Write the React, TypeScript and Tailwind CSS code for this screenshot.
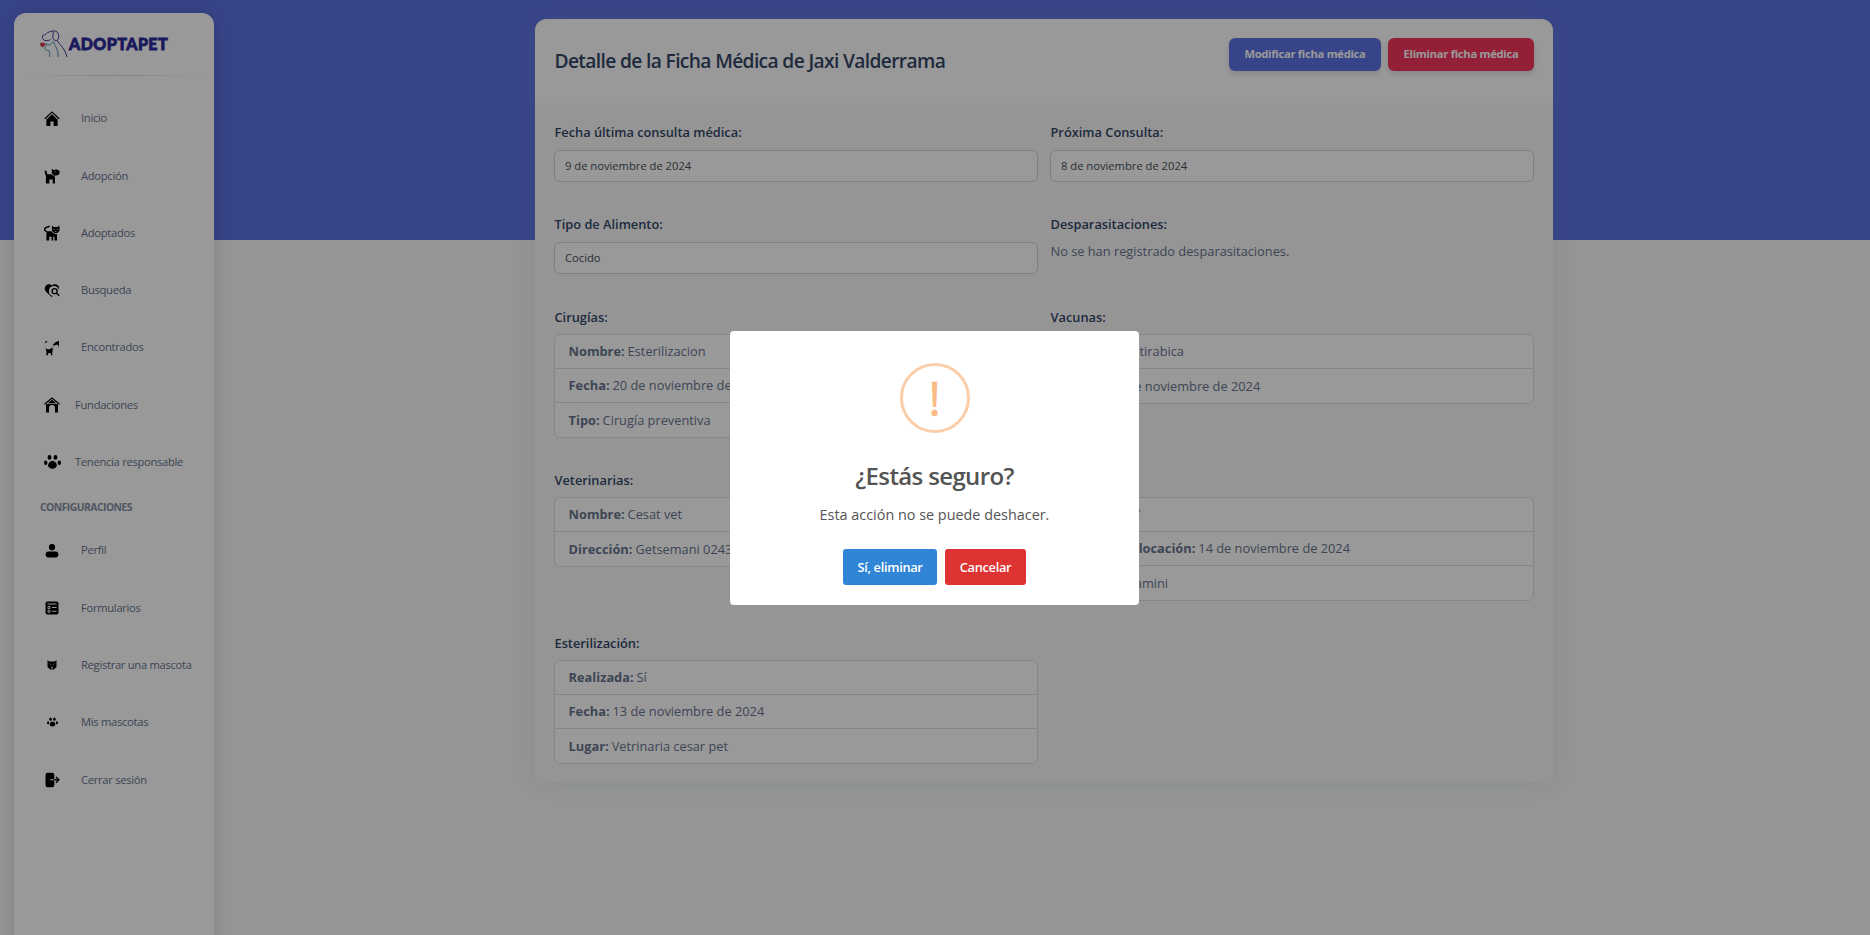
import React from "react";

type Row = [string, string];

const Svg = ({ children, size = 16 }: { children: React.ReactNode; size?: number }) => (
  <svg width={size} height={size} viewBox="0 0 16 16" fill="currentColor">
    {children}
  </svg>
);

const HomeIcon = () => (
  <Svg>
    <path d="M.8 7.7 8 1.100l7.200 6.600" fill="none" stroke="currentColor" strokeWidth="1.200" />
    <path d="M8 3.300 2.400 8.400V15h4v-4.600h3.200V15h4V8.400z" />
  </Svg>
);

const DogIcon = () => (
  <Svg>
    <path d="M.6 3.800a1.100 1.100 0 1 1 2.100.4L3.500 6.300H7.500l3.500 2.400V15.400H8.700v-3.800H5.400v3.800H1.900V8z" />
    <path d="M7.800.8 10 2.200l2-.9 3.500 1.500v2.600l-1.500 1.800H12L10.500 8 7.800 5.200z" />
    <circle cx="11.600" cy="3.800" r=".5" fill="#fff" />
  </Svg>
);

const CatIcon = () => (
  <Svg>
    <path d="M5.600.9c-1.200 1.900-5 .8-5 3.500 0 1.500 1.500 1.500 1.900 2.500" fill="none" stroke="currentColor" strokeWidth="1.500" />
    <path d="M2.600 6.200h5.100c1 1.900 2.600 2.900 5.300 2.700v6.500h-2.500v-3.600H9.200v3.600H7.500v-3.600H5.200v3.600H2.300z" />
    <path d="M8 .6 9.800 2h3.600L15.500.6v5.100l-2.200 2.400h-3.100L8 5.700z" />
    <path d="M9.900 3.900v1M13.300 3.900v1M10.900 6.200h1.500" stroke="#fff" strokeWidth=".8" />
  </Svg>
);

const HeartSearchIcon = () => (
  <Svg>
    <path d="M8 2.600C6.500.8 3.700.9 2 2.600.3 4.300.4 7 2 8.700L7.600 14l1.200-1.100A5 5 0 1 1 14.800 6.800C15.400 5.200 15 3.600 14 2.600 12.300.9 9.500.8 8 2.600z" />
    <circle cx="10.600" cy="8.200" r="2.500" fill="none" stroke="currentColor" strokeWidth="1.300" />
    <path d="m12.400 10 2.800 2.800" stroke="currentColor" strokeWidth="1.400" />
  </Svg>
);

const FoundIcon = () => (
  <Svg>
    <path d="M1.300 1.300h2.600L2.200 2.400 1.300 3.800zM8.600 4.900 11.400 2.200 14.800.8 15.200 4.500 14.500 6 12.800 4.500 10.600 5.400z" />
    <path d="M1.500 7.800 3 9.300h3.200L7.200 7.800l1.900 1.300-.8 2.200V15.300H7.100l-.4-2.300H4.500L3.600 15.300H2.200l.3-3.300z" />
    <path d="M8.400 7.200h1M14 6.900h.8" stroke="currentColor" strokeWidth=".7" />
  </Svg>
);

const ShelterIcon = () => (
  <Svg>
    <path d="M.5 7.300 8 1l7.500 6.300" fill="none" stroke="currentColor" strokeWidth="1.200" />
    <path d="M8 2.700 3.800 6.200h8.400zM2 7h12v8.600h-3V11a3 3 0 0 0-6 0v4.600H2z" />
  </Svg>
);

const PawIcon = ({ size }: { size: number }) => (
  <Svg size={size}>
    <ellipse cx="5.200" cy="3.200" rx="1.800" ry="2.300" />
    <ellipse cx="10.800" cy="3.200" rx="1.800" ry="2.300" />
    <ellipse cx="1.600" cy="8.200" rx="1.600" ry="2.200" />
    <ellipse cx="14.400" cy="8.200" rx="1.600" ry="2.200" />
    <path d="M8 6.600c2.600 0 4.100 2.600 4.100 4.300 0 1.900-1.900 2.900-4.100 2.900s-4.100-1-4.100-2.900C3.900 9.200 5.400 6.600 8 6.600z" />
  </Svg>
);

const UserIcon = () => (
  <Svg>
    <circle cx="8" cy="4.200" r="3.100" />
    <rect x="1.600" y="8.600" width="12.800" height="6" rx="3" />
  </Svg>
);

const FormIcon = () => (
  <Svg>
    <rect x="1.500" y="1.500" width="13" height="13" rx="2" />
    <path d="M3.500 4h9M8 7.500h4.500M8 11.300h4.500" stroke="#fff" strokeWidth="1" />
    <path d="M4 6.500h2v2H4zM4 10.300h2v2H4z" fill="none" stroke="#fff" strokeWidth=".9" />
  </Svg>
);

const CatFaceIcon = () => (
  <Svg size={12}>
    <path d="M2 1.500l2.600 1.800h6.800L14 1.500v9l-3.500 3.500h-5L2 10.500z" />
    <path d="M4.800 6l1.400 1.500M11.200 6 9.800 7.500M6.500 10.500 8 11.500l1.500-1M8 11v3" stroke="#fff" strokeWidth=".9" fill="none" />
  </Svg>
);

const ExitIcon = () => (
  <Svg>
    <path d="M3.700.8h4.400a2.200 2.200 0 0 1 2.200 2.200v4.300H6.200v1h4.100V13a2.200 2.200 0 0 1-2.200 2.200H3.700A2.200 2.200 0 0 1 1.500 13V3A2.200 2.200 0 0 1 3.700.8z" />
    <path d="M10.300 7.800h4.500M12 4.900l2.900 2.900L12 10.700" stroke="currentColor" strokeWidth="1.400" fill="none" />
  </Svg>
);

const Logo = () => (
  <div className="flex items-center">
    <svg width="29" height="28" viewBox="0 0 29 28" fill="none" strokeWidth="1">
      <path d="M11 1.500C8 1.800 6.500 3.500 5.500 4.500 4 5.500 2.800 4.800 2.500 5.500 2 8 3 10 5 10.500c2 .3 4.500 0 5.500-1M11 1.500c3-1.300 6-.5 7.300 2 .9 2.500.5 5.500-1.300 7-2.500.5-3.800-1-4.300-3.500-.2-2 1.300-3.500.3-5.500M17 10.500c2.500 4 8 8 10 16.500" stroke="#49389b" />
      <path d="M13.500 11.500c-1.500 1.500-2 3-4.500 3.500-1.500 0-1.800-1-2.500-1.500-.3 2-.8 3.300-2 5 .8 1.600 3 1.800 4.500 2.500 1.200 1.800.5 3.500.8 6M13.500 11.500c.5 3.500 5.200 7 4.500 15.500" stroke="#4a8fb5" />
      <path d="M2.600 17.200.5 15c-1-1.700 1.200-2.900 2.100-1.300.9-1.600 3.100-.4 2.100 1.300z" fill="#d42a3c" stroke="#d42a3c" strokeWidth=".6" />
    </svg>
    <span className="text-[16px] leading-none font-black tracking-[0.450px] text-[#2a2a9a] [font-family:Lato,sans-serif] [-webkit-text-stroke:0.800px_#2a2a9a]">
      ADOPTAPET
    </span>
  </div>
);

const NavItem = ({ icon, label, near }: { icon: React.ReactNode; label: string; near?: boolean }) => (
  <li className="flex h-[57.300px] items-center">
    <span className="flex w-6 justify-center text-black">{icon}</span>
    <span className={near ? "ml-[11px]" : "ml-[17px]"}>{label}</span>
  </li>
);

const Label = ({ children }: { children: React.ReactNode }) => (
  <div className="h-[27.500px] pl-[0.500px] text-[12.800px] leading-5 font-semibold text-[#344767]">{children}</div>
);

const Field = ({ value }: { value: string }) => (
  <div className="flex h-8 items-center rounded-md border border-[#d2d6da] bg-white px-2.5 pt-px text-[11.200px] text-[#495057]">
    {value}
  </div>
);

const List = ({ rows }: { rows: Row[] }) => (
  <ul className="divide-y divide-[#dcdee0] rounded-md border border-[#dcdee0] bg-white">
    {rows.map(([name, value]) => (
      <li key={name} className="flex h-[34px] items-center gap-[3px] px-[13.600px] text-[12.800px] not-first:pt-px">
        <strong className="font-bold">{name}</strong>
        {value}
      </li>
    ))}
  </ul>
);

export default function App() {
  return (
    <div className="relative h-[935px] overflow-hidden bg-[#f8faf9] text-[#67748e] [font-family:'Open_Sans',sans-serif]">
      <div className="absolute inset-x-0 top-0 h-60 bg-[#5e72e4]" />
      <div className="relative flex h-full">
        <aside className="mt-[13px] ml-3.5 h-[960px] w-[200px] shrink-0 rounded-xl bg-white shadow-[0_0_20px_rgba(0,0,0,0.15)]">
          <div className="flex h-[62px] items-center pl-[26px]">
            <Logo />
          </div>
          <div className="mx-3 h-px bg-gradient-to-r from-transparent via-black/15 to-transparent" />
          <ul className="mt-3.5 pl-[26px] text-[11.200px] tracking-[-0.290px]">
            <NavItem icon={<HomeIcon />} label="Inicio" />
            <NavItem icon={<DogIcon />} label="Adopción" />
            <NavItem icon={<CatIcon />} label="Adoptados" />
            <NavItem icon={<HeartSearchIcon />} label="Busqueda" />
            <NavItem icon={<FoundIcon />} label="Encontrados" />
            <NavItem icon={<ShelterIcon />} label="Fundaciones" near />
            <NavItem icon={<PawIcon size={17} />} label="Tenencia responsable" near />
          </ul>
          <div className="mt-1.5 h-5 pl-[26px] text-[10.400px] leading-5 font-bold tracking-[-0.550px] opacity-80">
            CONFIGURACIONES
          </div>
          <ul className="mt-[5px] pl-[26px] text-[11.200px] tracking-[-0.290px]">
            <NavItem icon={<UserIcon />} label="Perfil" />
            <NavItem icon={<FormIcon />} label="Formularios" />
            <NavItem icon={<CatFaceIcon />} label="Registrar una mascota" />
            <NavItem icon={<PawIcon size={11} />} label="Mis mascotas" />
            <NavItem icon={<ExitIcon />} label="Cerrar sesión" />
          </ul>
        </aside>

        <main className="mt-[19px] ml-[321px] h-[764px] w-[1018px] rounded-t-xl bg-[#f8f9fa] shadow-[0_0_26px_rgba(136,152,190,0.2)]">
          <header className="flex h-[84px] justify-between rounded-t-xl bg-white pt-[19px] pr-[19px] pl-[19.500px]">
            <h1 className="mt-[7px] text-[19.200px] leading-8 font-semibold tracking-[-0.640px] text-[#344767]">
              Detalle de la Ficha Médica de Jaxi Valderrama
            </h1>
            <div className="flex h-[33px] gap-[7px] text-[11.200px] font-bold tracking-[-0.280px] text-white">
              <button className="w-[152px] rounded-md bg-[#5e72e4] shadow-[0_3px_5px_rgba(50,50,93,0.15)]">Modificar ficha médica</button>
              <button className="w-[146px] rounded-md bg-[#f5365c] shadow-[0_3px_5px_rgba(50,50,93,0.15)]">Eliminar ficha médica</button>
            </div>
          </header>
          <div className="grid grid-cols-[484px_484px] grid-rows-[92px_92.500px_163px_163px_131px] gap-x-3 pt-[19px] pl-[19px]">
            <section>
              <Label>Fecha última consulta médica:</Label>
              <Field value="9 de noviembre de 2024" />
            </section>
            <section>
              <Label>Próxima Consulta:</Label>
              <Field value="8 de noviembre de 2024" />
            </section>
            <section>
              <Label>Tipo de Alimento:</Label>
              <Field value="Cocido" />
            </section>
            <section>
              <Label>Desparasitaciones:</Label>
              <p className="-mt-px pl-[0.500px] text-[12.800px] leading-5">No se han registrado desparasitaciones.</p>
            </section>
            <section>
              <Label>Cirugías:</Label>
              <List rows={[["Nombre:", "Esterilizacion"], ["Fecha:", "20 de noviembre de 2024"], ["Tipo:", "Cirugía preventiva"]]} />
            </section>
            <section>
              <Label>Vacunas:</Label>
              <List rows={[["Nombre:", "Antirabica"], ["Fecha:", "20 de noviembre de 2024"]]} />
            </section>
            <section>
              <Label>Veterinarias:</Label>
              <List rows={[["Nombre:", "Cesat vet"], ["Dirección:", "Getsemani 0243"]]} />
            </section>
            <section>
              <Label>Microchip:</Label>
              <List rows={[["Código:", "M27"], ["Fecha de colocación:", "14 de noviembre de 2024"], ["Lugar:", "Getsamini"]]} />
            </section>
            <section>
              <Label>Esterilización:</Label>
              <List rows={[["Realizada:", "Sí"], ["Fecha:", "13 de noviembre de 2024"], ["Lugar:", "Vetrinaria cesar pet"]]} />
            </section>
          </div>
        </main>
      </div>

      <div className="absolute inset-0 flex items-center justify-center bg-black/40">
        <div className="mt-px mr-px flex h-[274px] w-[409px] flex-col items-center rounded bg-white text-[#545454]">
          <div className="mt-8 flex h-[70px] w-[70px] items-center justify-center rounded-full border-[3px] border-[#fbcda8] text-[#f8bb86]">
            <span className="text-[48px] leading-none [-webkit-text-stroke:0.600px_#f8bb86]">!</span>
          </div>
          <h2 className="mt-[25px] text-2xl leading-9 font-semibold tracking-[-0.640px]">¿Estás seguro?</h2>
          <p className="mt-[11px] text-[14.400px] leading-5">Esta acción no se puede deshacer.</p>
          <div className="mt-6 flex h-9 gap-2 text-[12.800px] font-semibold tracking-[-0.300px] text-white">
            <button className="w-[94px] rounded-[3px] bg-[#3085d6] pt-px">Sí, eliminar</button>
            <button className="w-[81px] rounded-[3px] bg-[#dd3333] pt-px">Cancelar</button>
          </div>
        </div>
      </div>
    </div>
  );
}
